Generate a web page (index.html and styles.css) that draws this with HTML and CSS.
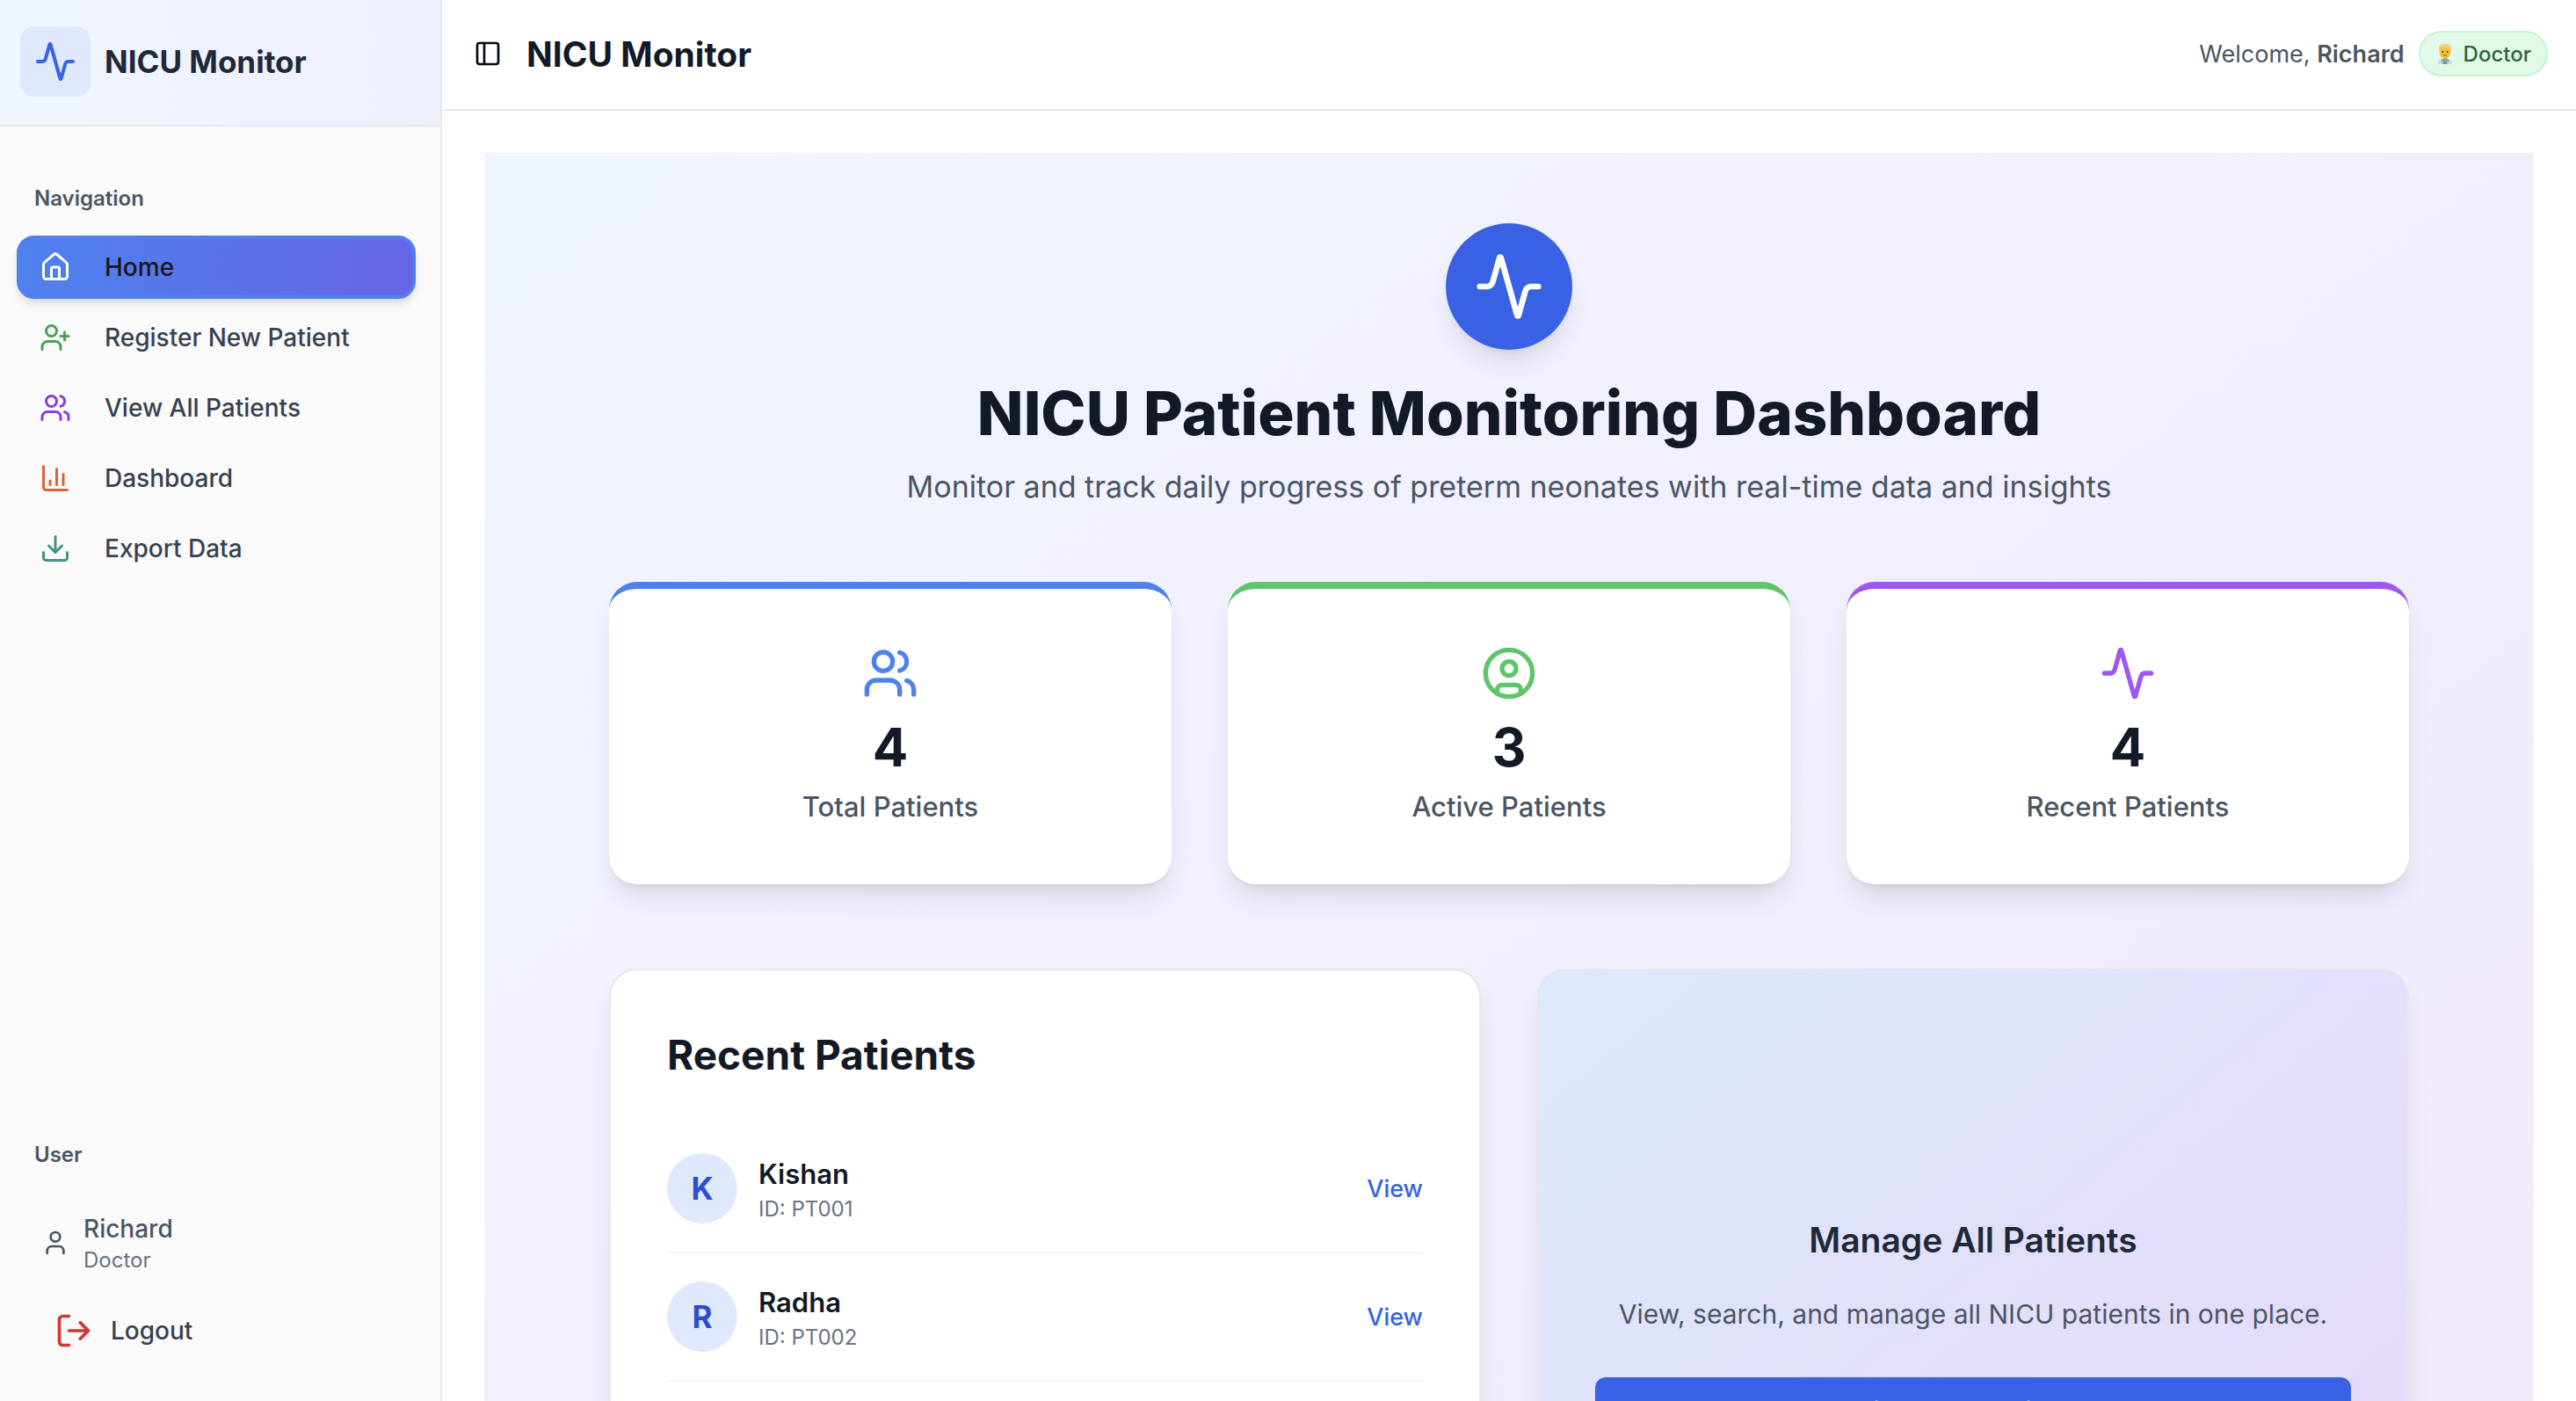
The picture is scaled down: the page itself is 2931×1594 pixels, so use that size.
FILE: index.html
```html
<!DOCTYPE html>
<html lang="en">
<head>
<meta charset="utf-8">
<title>NICU Monitor</title>
<meta name="viewport" content="width=device-width, initial-scale=1">
<link rel="stylesheet" href="styles.css">
</head>
<body>
<svg class="sprite" aria-hidden="true">
  <symbol id="activity" viewBox="0 0 24 24"><path d="M22 12h-2.48a2 2 0 0 0-1.93 1.46l-2.35 8.36a.25.25 0 0 1-.48 0L9.24 2.18a.25.25 0 0 0-.48 0l-2.35 8.36A2 2 0 0 1 4.49 12H2"/></symbol>
  <symbol id="house" viewBox="0 0 24 24"><path d="M15 21v-8a1 1 0 0 0-1-1h-4a1 1 0 0 0-1 1v8"/><path d="M3 10a2 2 0 0 1 .709-1.528l7-5.999a2 2 0 0 1 2.582 0l7 5.999A2 2 0 0 1 21 10v9a2 2 0 0 1-2 2H5a2 2 0 0 1-2-2z"/></symbol>
  <symbol id="user-plus" viewBox="0 0 24 24"><path d="M16 21v-2a4 4 0 0 0-4-4H6a4 4 0 0 0-4 4v2"/><circle cx="9" cy="7" r="4"/><path d="M19 8v6M22 11h-6"/></symbol>
  <symbol id="users" viewBox="0 0 24 24"><path d="M16 21v-2a4 4 0 0 0-4-4H6a4 4 0 0 0-4 4v2"/><circle cx="9" cy="7" r="4"/><path d="M22 21v-2a4 4 0 0 0-3-3.87M16 3.13a4 4 0 0 1 0 7.75"/></symbol>
  <symbol id="chart" viewBox="0 0 24 24"><path d="M3 3v16a2 2 0 0 0 2 2h16M18 17V9M13 17V5M8 17v-3"/></symbol>
  <symbol id="download" viewBox="0 0 24 24"><path d="M12 15V3M21 15v4a2 2 0 0 1-2 2H5a2 2 0 0 1-2-2v-4M7 10l5 5 5-5"/></symbol>
  <symbol id="user" viewBox="0 0 24 24"><path d="M19 21v-2a4 4 0 0 0-4-4H9a4 4 0 0 0-4 4v2"/><circle cx="12" cy="7" r="4"/></symbol>
  <symbol id="log-out" viewBox="0 0 24 24"><path d="M9 21H5a2 2 0 0 1-2-2V5a2 2 0 0 1 2-2h4M16 17l5-5-5-5M21 12H9"/></symbol>
  <symbol id="panel-left" viewBox="0 0 24 24"><rect x="3" y="3" width="18" height="18" rx="2"/><path d="M9 3v18"/></symbol>
  <symbol id="circle-user-round" viewBox="0 0 24 24"><circle cx="12" cy="12" r="10"/><circle cx="12" cy="10" r="3"/><path d="M7 20.662V19a2 2 0 0 1 2-2h6a2 2 0 0 1 2 2v1.662"/></symbol>
</svg>
<div class="app">
  <aside class="sidebar">
    <div class="brand">
      <span class="brand-mark"><svg class="icon icon-lg"><use href="#activity"/></svg></span>
      <span class="brand-name">NICU Monitor</span>
    </div>
    <nav class="nav" aria-label="Navigation">
      <p class="group-label">Navigation</p>
      <a class="nav-item active" href="#home"><svg class="icon"><use href="#house"/></svg><span>Home</span></a>
      <a class="nav-item green" href="#register"><svg class="icon"><use href="#user-plus"/></svg><span>Register New Patient</span></a>
      <a class="nav-item purple" href="#patients"><svg class="icon"><use href="#users"/></svg><span>View All Patients</span></a>
      <a class="nav-item orange" href="#dashboard"><svg class="icon"><use href="#chart"/></svg><span>Dashboard</span></a>
      <a class="nav-item teal" href="#export"><svg class="icon"><use href="#download"/></svg><span>Export Data</span></a>
    </nav>
    <div class="account">
      <p class="group-label">User</p>
      <div class="account-user">
        <svg class="icon icon-sm"><use href="#user"/></svg>
        <div>
          <p class="account-name">Richard</p>
          <p class="account-role">Doctor</p>
        </div>
      </div>
      <button class="logout" type="button"><svg class="icon icon-md"><use href="#log-out"/></svg><span>Logout</span></button>
    </div>
  </aside>
  <div class="page">
    <header class="topbar">
      <button class="toggle" type="button" aria-label="Toggle sidebar"><svg class="icon icon-sm"><use href="#panel-left"/></svg></button>
      <p class="topbar-title">NICU Monitor</p>
      <p class="welcome">Welcome, <b>Richard</b></p>
      <span class="role">
        <svg class="doctor" viewBox="0 0 16 24" aria-hidden="true">
          <path d="M0 24c0-4 2-6 5-6.500h6c3 .5 5 2.500 5 6.500z" fill="#d3d7e2"/>
          <path d="M5.500 18h5v2L9.500 24h-3L5.500 20z" fill="#4c9fc0"/>
          <path d="M5 18l-1 3 2.500 3M11 18l1 3-2.500 3" fill="none" stroke="#8d94a8"/>
          <path d="M6 15h4v3.500L8 20l-2-1.500z" fill="#dc9a2c"/>
          <ellipse cx="8" cy="10" rx="6.500" ry="7.500" fill="#f7bd3c"/>
          <path d="M1 9C0 3 3 1 8 1s8 2 7 8c-1-2-1-3-3-4-3 1-6 1-8 0-2 1-2 2-3 4z" fill="#f2d06c"/>
          <circle cx="5.300" cy="10" r="1" fill="#4a3313"/><circle cx="10.700" cy="10" r="1" fill="#4a3313"/>
          <path d="M6 14h4" stroke="#8a5a18"/>
        </svg>
        Doctor
      </span>
    </header>
    <main class="main">
      <div class="panel">
        <section class="hero">
          <span class="hero-mark"><svg class="icon"><use href="#activity"/></svg></span>
          <h1>NICU Patient Monitoring Dashboard</h1>
          <p>Monitor and track daily progress of preterm neonates with real-time data and insights</p>
        </section>
        <section class="stats">
          <div class="stat blue"><svg class="icon"><use href="#users"/></svg><p class="stat-value">4</p><p class="stat-label">Total Patients</p></div>
          <div class="stat green"><svg class="icon"><use href="#circle-user-round"/></svg><p class="stat-value">3</p><p class="stat-label">Active Patients</p></div>
          <div class="stat purple"><svg class="icon"><use href="#activity"/></svg><p class="stat-value">4</p><p class="stat-label">Recent Patients</p></div>
        </section>
        <section class="columns">
          <div class="card">
            <h2>Recent Patients</h2>
            <ul class="patients">
              <li><span class="avatar">K</span><div class="who"><p class="who-name">Kishan</p><p class="who-id">ID: PT001</p></div><a href="#pt001">View</a></li>
              <li><span class="avatar">R</span><div class="who"><p class="who-name">Radha</p><p class="who-id">ID: PT002</p></div><a href="#pt002">View</a></li>
            </ul>
          </div>
          <div class="card manage">
            <h3>Manage All Patients</h3>
            <p>View, search, and manage all NICU patients in one place.</p>
            <button class="primary" type="button">View All Patients</button>
          </div>
        </section>
      </div>
    </main>
  </div>
</div>
</body>
</html>
```
FILE: styles.css
```css
* { box-sizing: border-box; margin: 0; padding: 0; }
body { font-family: Inter, "Liberation Sans", sans-serif; background: #fff; color: #131926; }
button { font: inherit; background: none; border: 0; cursor: pointer; }
a { text-decoration: none; }
ul { list-style: none; }
.sprite { display: none; }
.icon { flex: none; width: 36px; height: 36px; fill: none; stroke: currentColor; stroke-width: 2; stroke-linecap: round; stroke-linejoin: round; }
.icon-sm { width: 32px; height: 32px; }
.icon-md { width: 44px; height: 44px; }
.icon-lg { width: 48px; height: 48px; }

.app { display: flex; height: 100vh; overflow: hidden; }

/* Sidebar */
.sidebar { flex: none; width: 503px; display: flex; flex-direction: column; background: #fafafa; border-right: 2px solid #e5e7eb; }
.brand { display: flex; align-items: center; gap: 16px; height: 144px; padding: 0 23px 2px; border-bottom: 2px solid #e5e7eb; background: linear-gradient(to right, #f0f6ff, #eeeffd); }
.brand-mark { display: grid; place-items: center; width: 80px; height: 80px; border-radius: 16px; background: #dfe9fb; color: #3862e3; }
.brand-name { font-size: 35px; font-weight: 700; color: #202937; }
.nav { display: flex; flex-direction: column; gap: 8px; padding: 50px 28px 0 19px; }
.group-label { height: 64px; padding: 0 20px; line-height: 64px; font-size: 24px; font-weight: 600; color: #4b5563; }
.nav .group-label { margin-bottom: 2px; }
.nav-item { display: flex; align-items: center; gap: 38px; height: 72px; padding: 0 22px; border: 4px solid transparent; border-radius: 20px; font-size: 28px; font-weight: 500; }
.nav-item span { color: #374151; }
.nav-item.active { color: #fff; border-color: #4f81ed; background: linear-gradient(to right, #4f81ed, #6565e6); box-shadow: 0 8px 12px -2px rgb(0 0 0 / 10%), 0 4px 8px -4px rgb(0 0 0 / 10%); }
.nav-item.active span { color: #18181b; }
.nav-item.green { color: #4ba154; }
.nav-item.purple { color: #8b3be0; }
.nav-item.orange { color: #db6530; }
.nav-item.teal { color: #429287; }
.account { margin-top: auto; padding: 0 19px 40px; }
.account-user { display: flex; align-items: center; gap: 16px; padding: 32px 28px 0; color: #4b5563; }
.account-name { line-height: 40px; font-size: 28px; font-weight: 500; }
.account-role { line-height: 32px; font-size: 24px; color: #6b7280; }
.logout { display: flex; align-items: center; gap: 20px; height: 80px; margin-top: 24px; padding: 0 43px; color: #cf3a30; font-size: 28px; font-weight: 500; }
.logout span { color: #374151; }

/* Top bar */
.page { flex: 1; min-width: 0; display: flex; flex-direction: column; }
.topbar { flex: none; display: flex; align-items: center; height: 126px; padding: 0 32px 2px 36px; border-bottom: 2px solid #e2e8f0; }
.toggle { display: flex; color: #020817; }
.topbar-title { margin: 0 auto 0 28px; font-size: 39px; font-weight: 700; }
.welcome { margin-right: 16px; font-size: 27px; color: #4b5563; }
.welcome b { font-weight: 600; }
.role { display: flex; align-items: center; gap: 13px; height: 52px; padding: 0 17px 0 20px; border: 2px solid #c5f3d2; border-radius: 26px; background: #e1f9e8; color: #2f6439; font-size: 24px; font-weight: 500; }
.doctor { width: 16px; height: 24px; }

/* Dashboard */
.main { flex: 1; min-height: 0; overflow: hidden; padding: 48px; }
.panel { display: flex; flex-direction: column; align-items: center; padding: 80px 64px; background: linear-gradient(to bottom right, #f0f6ff, #f2e8fb); }
.hero { display: flex; flex-direction: column; align-items: center; text-align: center; margin-bottom: 80px; }
.hero-mark { display: grid; place-items: center; width: 144px; height: 144px; margin-bottom: 32px; border-radius: 50%; background: #3862e3; color: #fff; box-shadow: 0 20px 30px -6px rgb(0 0 0 / 10%), 0 8px 12px -8px rgb(0 0 0 / 10%); }
.hero-mark .icon { width: 80px; height: 80px; }
.hero h1 { margin-bottom: 16px; line-height: 80px; font-size: 69px; font-weight: 800; }
.hero p { line-height: 56px; font-size: 34px; color: #4b5563; }
.stats, .columns { display: grid; gap: 64px; width: 100%; max-width: 2048px; }
.stats { grid-template-columns: repeat(3, 1fr); margin-bottom: 96px; }
.stat { display: flex; flex-direction: column; align-items: center; padding: 64px; border-top: 8px solid; border-radius: 32px; background: #fff; box-shadow: 0 20px 30px -6px rgb(0 0 0 / 10%), 0 8px 12px -8px rgb(0 0 0 / 10%); }
.stat .icon { width: 64px; height: 64px; margin-bottom: 16px; }
.stat.blue { color: #4f81ed; }
.stat.green { color: #5fc46a; }
.stat.purple { color: #9f57f0; }
.stat-value { margin-bottom: 8px; line-height: 72px; font-size: 60px; font-weight: 700; color: #131926; }
.stat-label { line-height: 48px; font-size: 31px; font-weight: 500; color: #4b5563; }
.columns { grid-template-columns: repeat(2, 1fr); }
.card { min-height: 826px; padding: 64px; border: 2px solid #e5e7eb; border-radius: 32px; background: #fff; box-shadow: 0 20px 30px -6px rgb(0 0 0 / 10%), 0 8px 12px -8px rgb(0 0 0 / 10%); }
.card h2 { margin-bottom: 48px; line-height: 64px; font-size: 46px; font-weight: 700; }
.patients li { display: flex; align-items: center; gap: 24px; padding: 32px 0; border-bottom: 2px solid #f3f4f6; }
.avatar { display: grid; place-items: center; width: 80px; height: 80px; border-radius: 50%; background: #dfe9fb; color: #2b4fd0; font-size: 35px; font-weight: 700; }
.who { flex: 1; }
.who-name { line-height: 48px; font-size: 31px; font-weight: 600; }
.who-id { line-height: 32px; font-size: 24px; color: #6b7280; }
.patients a { font-size: 27px; font-weight: 500; color: #3862e3; }
.manage { display: flex; flex-direction: column; justify-content: center; text-align: center; background: linear-gradient(to bottom right, #dceafc, #e8d5fc); }
.manage h3 { margin-bottom: 32px; line-height: 56px; font-size: 39px; font-weight: 600; color: #202937; }
.manage p { margin-bottom: 48px; line-height: 48px; font-size: 30px; color: #4b5563; }
.primary { height: 80px; border-radius: 12px; background: #3862e3; color: #fff; font-size: 35px; font-weight: 500; }
```
